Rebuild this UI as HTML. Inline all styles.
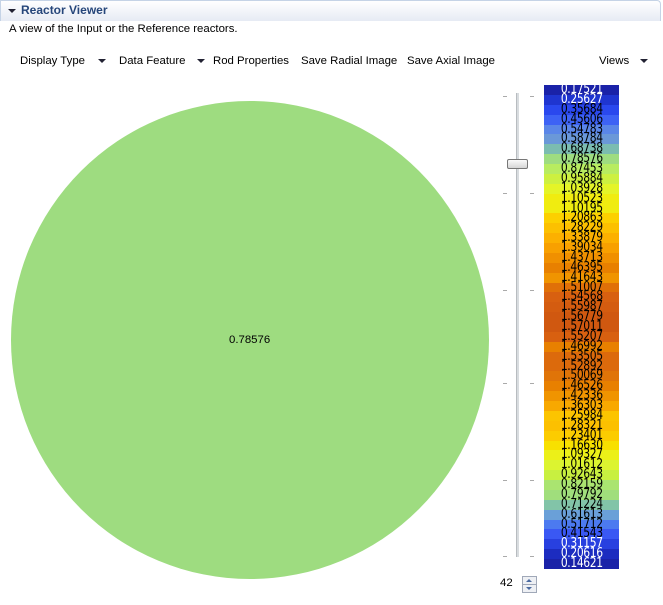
<!DOCTYPE html>
<html><head><meta charset="utf-8"><style>
*{margin:0;padding:0;box-sizing:border-box}
body{width:663px;height:605px;background:#fff;font-family:"Liberation Sans",sans-serif;font-size:11.4px;color:#000;position:relative;overflow:hidden}
.hdr{position:absolute;left:0;top:0;width:661px;height:21px;border:1px solid #c5d3e6;border-bottom:none;border-radius:0 4px 0 0;background:linear-gradient(#fff,#e6ebf4 100%)}
.ttl{position:absolute;left:21px;top:3px;font-weight:bold;color:#26467a;font-size:12px}
.tri{position:absolute;width:0;height:0;border-left:4px solid transparent;border-right:4px solid transparent;border-top:4px solid #223;}
.desc{position:absolute;left:9px;top:23px}
.tb{position:absolute;top:55px}
.circ{position:absolute;left:11px;top:101px;width:478px;height:478px;border-radius:50%;background:#9edc80}
.cl{position:absolute;left:229px;top:334px}
.bar{position:absolute;left:544px;top:85px;width:75px;height:484px;overflow:hidden}
.bar div{height:9.88px;line-height:10px;text-align:center;font-size:13px;font-family:"DejaVu Sans Condensed","Liberation Sans Narrow",sans-serif;letter-spacing:-0.4px;white-space:nowrap}
.bar span{display:inline-block;transform:scaleX(0.92)}
.tick{position:absolute;width:4px;height:1px;background:#aaa}
</style></head><body>
<div class="hdr"></div>
<div class="tri" style="left:8px;top:9px"></div>
<div class="ttl">Reactor Viewer</div>
<div class="desc">A view of the Input or the Reference reactors.</div>
<div class="tb" style="left:20px">Display Type</div><div class="tri" style="left:98px;top:59px"></div>
<div class="tb" style="left:119px">Data Feature</div><div class="tri" style="left:197px;top:59px"></div>
<div class="tb" style="left:213px">Rod Properties</div>
<div class="tb" style="left:301px">Save Radial Image</div>
<div class="tb" style="left:407px">Save Axial Image</div>
<div class="tb" style="left:599px">Views</div><div class="tri" style="left:640px;top:59px"></div>
<div class="circ"></div><div class="cl">0.78576</div>
<div style="position:absolute;left:516px;top:93px;width:3px;height:464px;background:#d8dcdf;border-left:1px solid #b8bcc0"></div>
<div style="position:absolute;left:507px;top:159px;width:21px;height:10px;border:1px solid #777;border-radius:2px;background:linear-gradient(#fafafa,#d6d6d6)"></div>
<div class="tick" style="left:503px;top:96px"></div><div class="tick" style="left:530px;top:96px"></div>
<div class="tick" style="left:503px;top:193px"></div><div class="tick" style="left:530px;top:193px"></div>
<div class="tick" style="left:503px;top:290px"></div><div class="tick" style="left:530px;top:290px"></div>
<div class="tick" style="left:503px;top:383px"></div><div class="tick" style="left:530px;top:383px"></div>
<div class="tick" style="left:503px;top:480px"></div><div class="tick" style="left:530px;top:480px"></div>
<div class="tick" style="left:503px;top:556px"></div><div class="tick" style="left:530px;top:556px"></div>
<div style="position:absolute;left:500px;top:577px">42</div>
<div style="position:absolute;left:522px;top:576px;width:15px;height:17px;border:1px solid #a0a8b8;background:#eef0f4"><div style="position:absolute;left:0;top:7px;width:13px;height:1px;background:#a0a8b8"></div><div class="tri" style="left:3px;top:2px;border-top:none;border-bottom:3px solid #4a6aa0;border-left-width:3px;border-right-width:3px"></div><div class="tri" style="left:3px;top:10px;border-top:3px solid #4a6aa0;border-left-width:3px;border-right-width:3px"></div></div>
<div class="bar">
<div style="background:#1a22a8;color:#fff"><span>0.17521</span></div>
<div style="background:#1f35d0;color:#fff"><span>0.25627</span></div>
<div style="background:#2a48ee"><span>0.35684</span></div>
<div style="background:#3d62f5"><span>0.45606</span></div>
<div style="background:#5a86e8"><span>0.54783</span></div>
<div style="background:#6a98d8"><span>0.58784</span></div>
<div style="background:#7bbcb0"><span>0.68738</span></div>
<div style="background:#9edc80"><span>0.78576</span></div>
<div style="background:#b8ec60"><span>0.87453</span></div>
<div style="background:#cdf040"><span>0.95884</span></div>
<div style="background:#e4f428"><span>1.03928</span></div>
<div style="background:#f0ec10"><span>1.10523</span></div>
<div style="background:#f0ec10"><span>1.10195</span></div>
<div style="background:#fcd000"><span>1.20863</span></div>
<div style="background:#fcc000"><span>1.28229</span></div>
<div style="background:#fcb000"><span>1.33879</span></div>
<div style="background:#f8a000"><span>1.39034</span></div>
<div style="background:#f09000"><span>1.43713</span></div>
<div style="background:#e88000"><span>1.46395</span></div>
<div style="background:#f09400"><span>1.41643</span></div>
<div style="background:#e07008"><span>1.51007</span></div>
<div style="background:#d86010"><span>1.54568</span></div>
<div style="background:#d45c10"><span>1.55987</span></div>
<div style="background:#d05810"><span>1.56779</span></div>
<div style="background:#d05810"><span>1.57011</span></div>
<div style="background:#d86010"><span>1.55207</span></div>
<div style="background:#e88000"><span>1.46992</span></div>
<div style="background:#dc6a0c"><span>1.53505</span></div>
<div style="background:#dc6a0c"><span>1.52892</span></div>
<div style="background:#e07408"><span>1.50069</span></div>
<div style="background:#e88000"><span>1.46526</span></div>
<div style="background:#f09400"><span>1.42336</span></div>
<div style="background:#f8a800"><span>1.36303</span></div>
<div style="background:#fcc400"><span>1.25984</span></div>
<div style="background:#fcc000"><span>1.28321</span></div>
<div style="background:#fccc00"><span>1.23401</span></div>
<div style="background:#f8e000"><span>1.16630</span></div>
<div style="background:#ecf018"><span>1.09327</span></div>
<div style="background:#dcf430"><span>1.01612</span></div>
<div style="background:#c8f040"><span>0.92643</span></div>
<div style="background:#aae470"><span>0.82159</span></div>
<div style="background:#a0de7c"><span>0.79792</span></div>
<div style="background:#82c4a8"><span>0.71224</span></div>
<div style="background:#6aa0d8"><span>0.61613</span></div>
<div style="background:#4c7af0"><span>0.51712</span></div>
<div style="background:#3a58f4"><span>0.41543</span></div>
<div style="background:#2840e0;color:#fff"><span>0.31157</span></div>
<div style="background:#1c2cc0;color:#fff"><span>0.20616</span></div>
<div style="background:#1a22a8;color:#fff"><span>0.14621</span></div>
</div>
</body></html>
